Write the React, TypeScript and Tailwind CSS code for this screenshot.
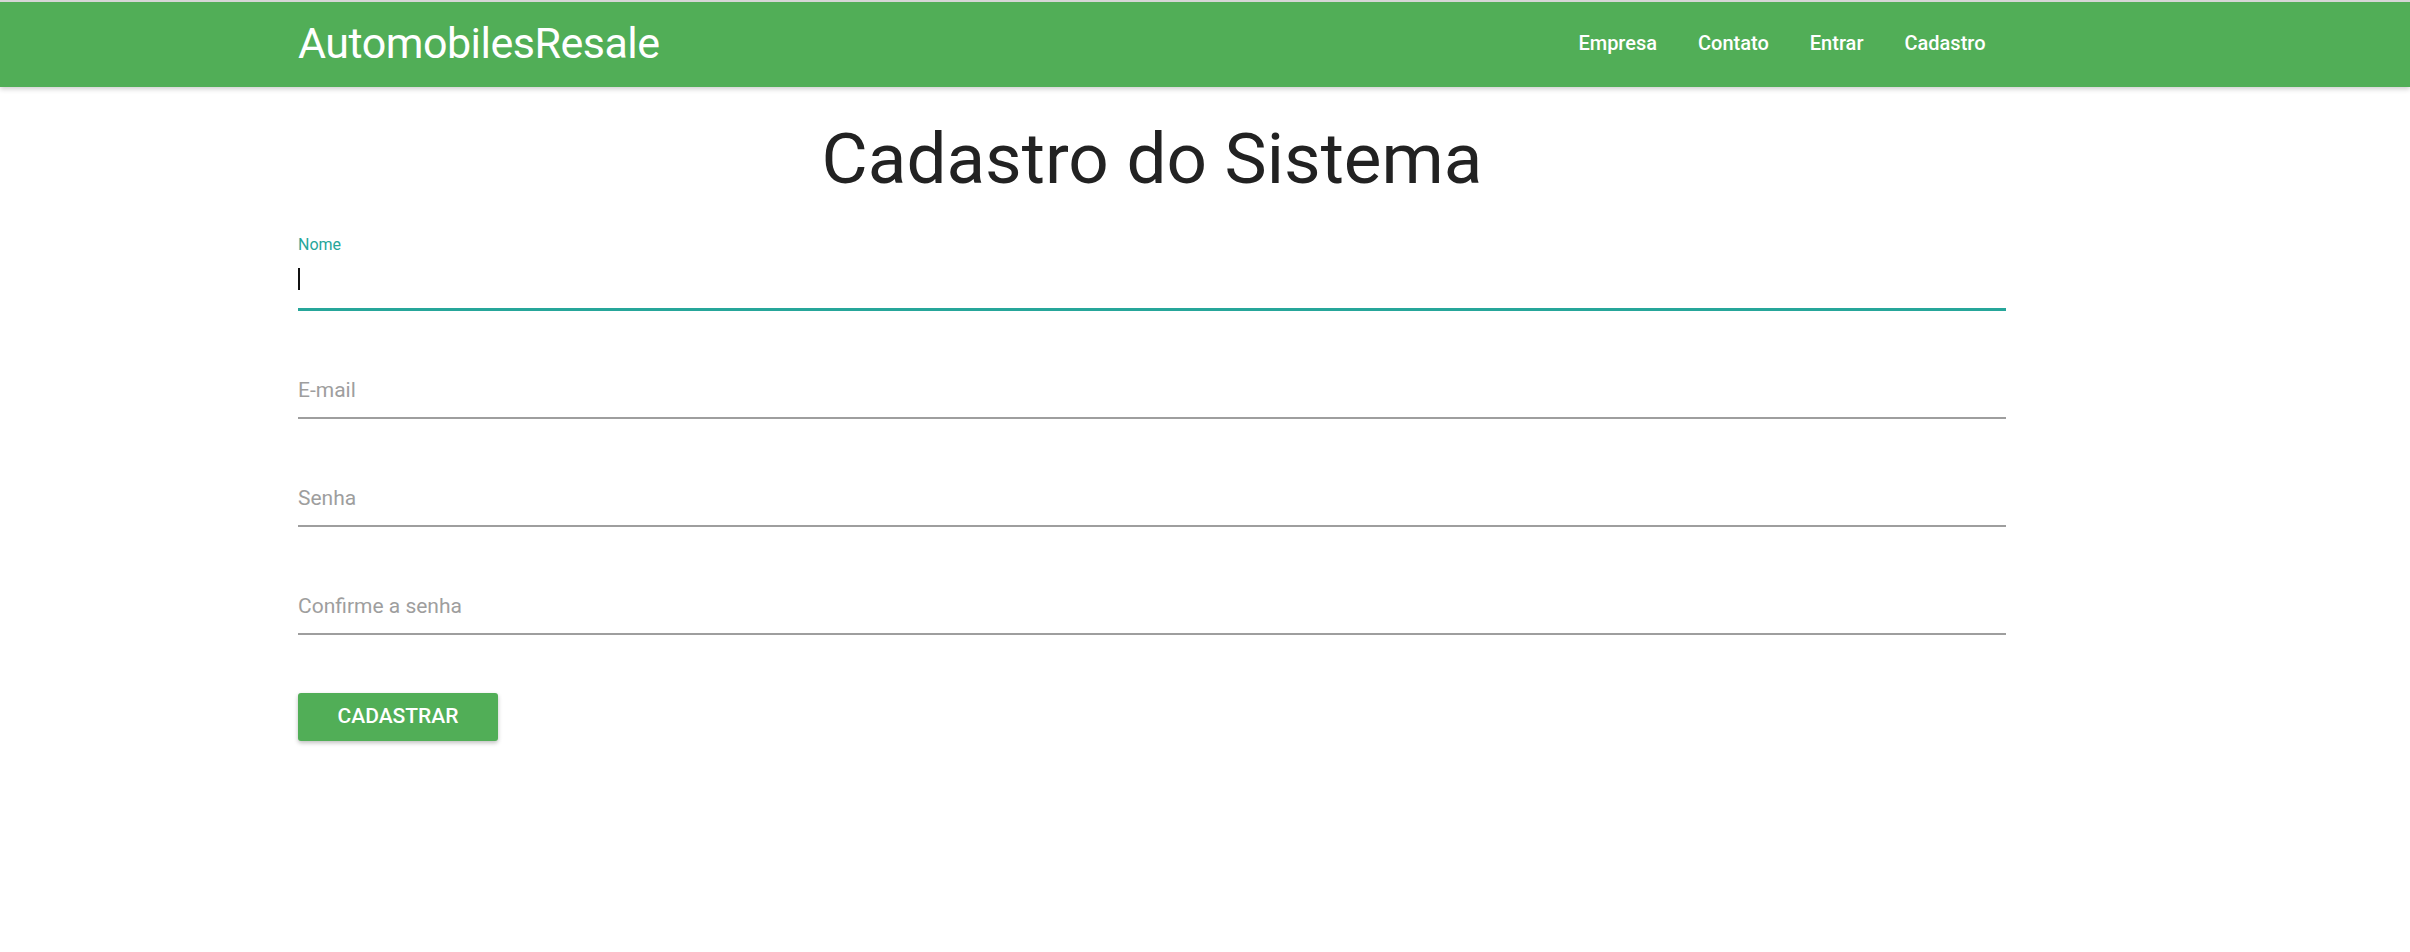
import React from 'react';

const links = ['Empresa', 'Contato', 'Entrar', 'Cadastro'];

const fields = [
  { id: 'email', placeholder: 'E-mail', type: 'email' },
  { id: 'senha', placeholder: 'Senha', type: 'password' },
  { id: 'confirm', placeholder: 'Confirme a senha', type: 'password' },
];

const Navbar = () => {
  return (
    <nav className="border-t-2 border-[#d6d6d6] bg-[#51ae57] h-[87px] shadow-[0_2px_5px_0_rgba(0,0,0,0.2)] relative z-10">
      <div className="ml-[298px] w-[1708px] h-full flex items-center justify-between">
        <a className="text-white text-[43px] leading-none tracking-[-0.5px] pb-[2px]">AutomobilesResale</a>
        <ul className="flex items-center pb-[3px]">
          {links.map((link) => (
            <li key={link}>
              <a className="block px-[20.5px] text-white text-[20px] font-medium leading-none">{link}</a>
            </li>
          ))}
        </ul>
      </div>
    </nav>
  );
};

export default function App() {
  return (
    <div className="min-h-[952px] w-full bg-white font-['Roboto','Liberation_Sans',sans-serif] text-[#222]">
      <Navbar />

      <main className="ml-[298px] w-[1708px]">
        <h1 className="mt-[33px] text-center text-[71px] leading-[77px] font-normal text-[#222]">
          Cadastro do Sistema
        </h1>

        <form className="mt-[39px]">
          <div>
            <label className="block text-[16px] leading-[18px] text-[#26a69a]">Nome</label>
            <div className="relative border-b-[3px] border-[#26a69a]">
              <input className="w-full h-[54px] outline-none text-[21px] bg-transparent" />
              <span className="absolute left-0 top-[14px] w-[2px] h-[22px] bg-[#111]" />
            </div>
          </div>

          {fields.map((f) => (
            <div key={f.id} className="mt-[52px] border-b-2 border-[#9e9e9e]">
              <input
                type={f.type}
                placeholder={f.placeholder}
                className="w-full h-[54px] outline-none text-[21px] bg-transparent placeholder:text-[#9e9e9e]"
              />
            </div>
          ))}

          <button
            type="button"
            className="mt-[58px] w-[200px] h-[48px] rounded-[3px] bg-[#51ae57] text-white text-[21px] font-medium uppercase shadow-[0_2px_4px_0_rgba(0,0,0,0.25)]"
          >
            Cadastrar
          </button>
        </form>
      </main>
    </div>
  );
}
